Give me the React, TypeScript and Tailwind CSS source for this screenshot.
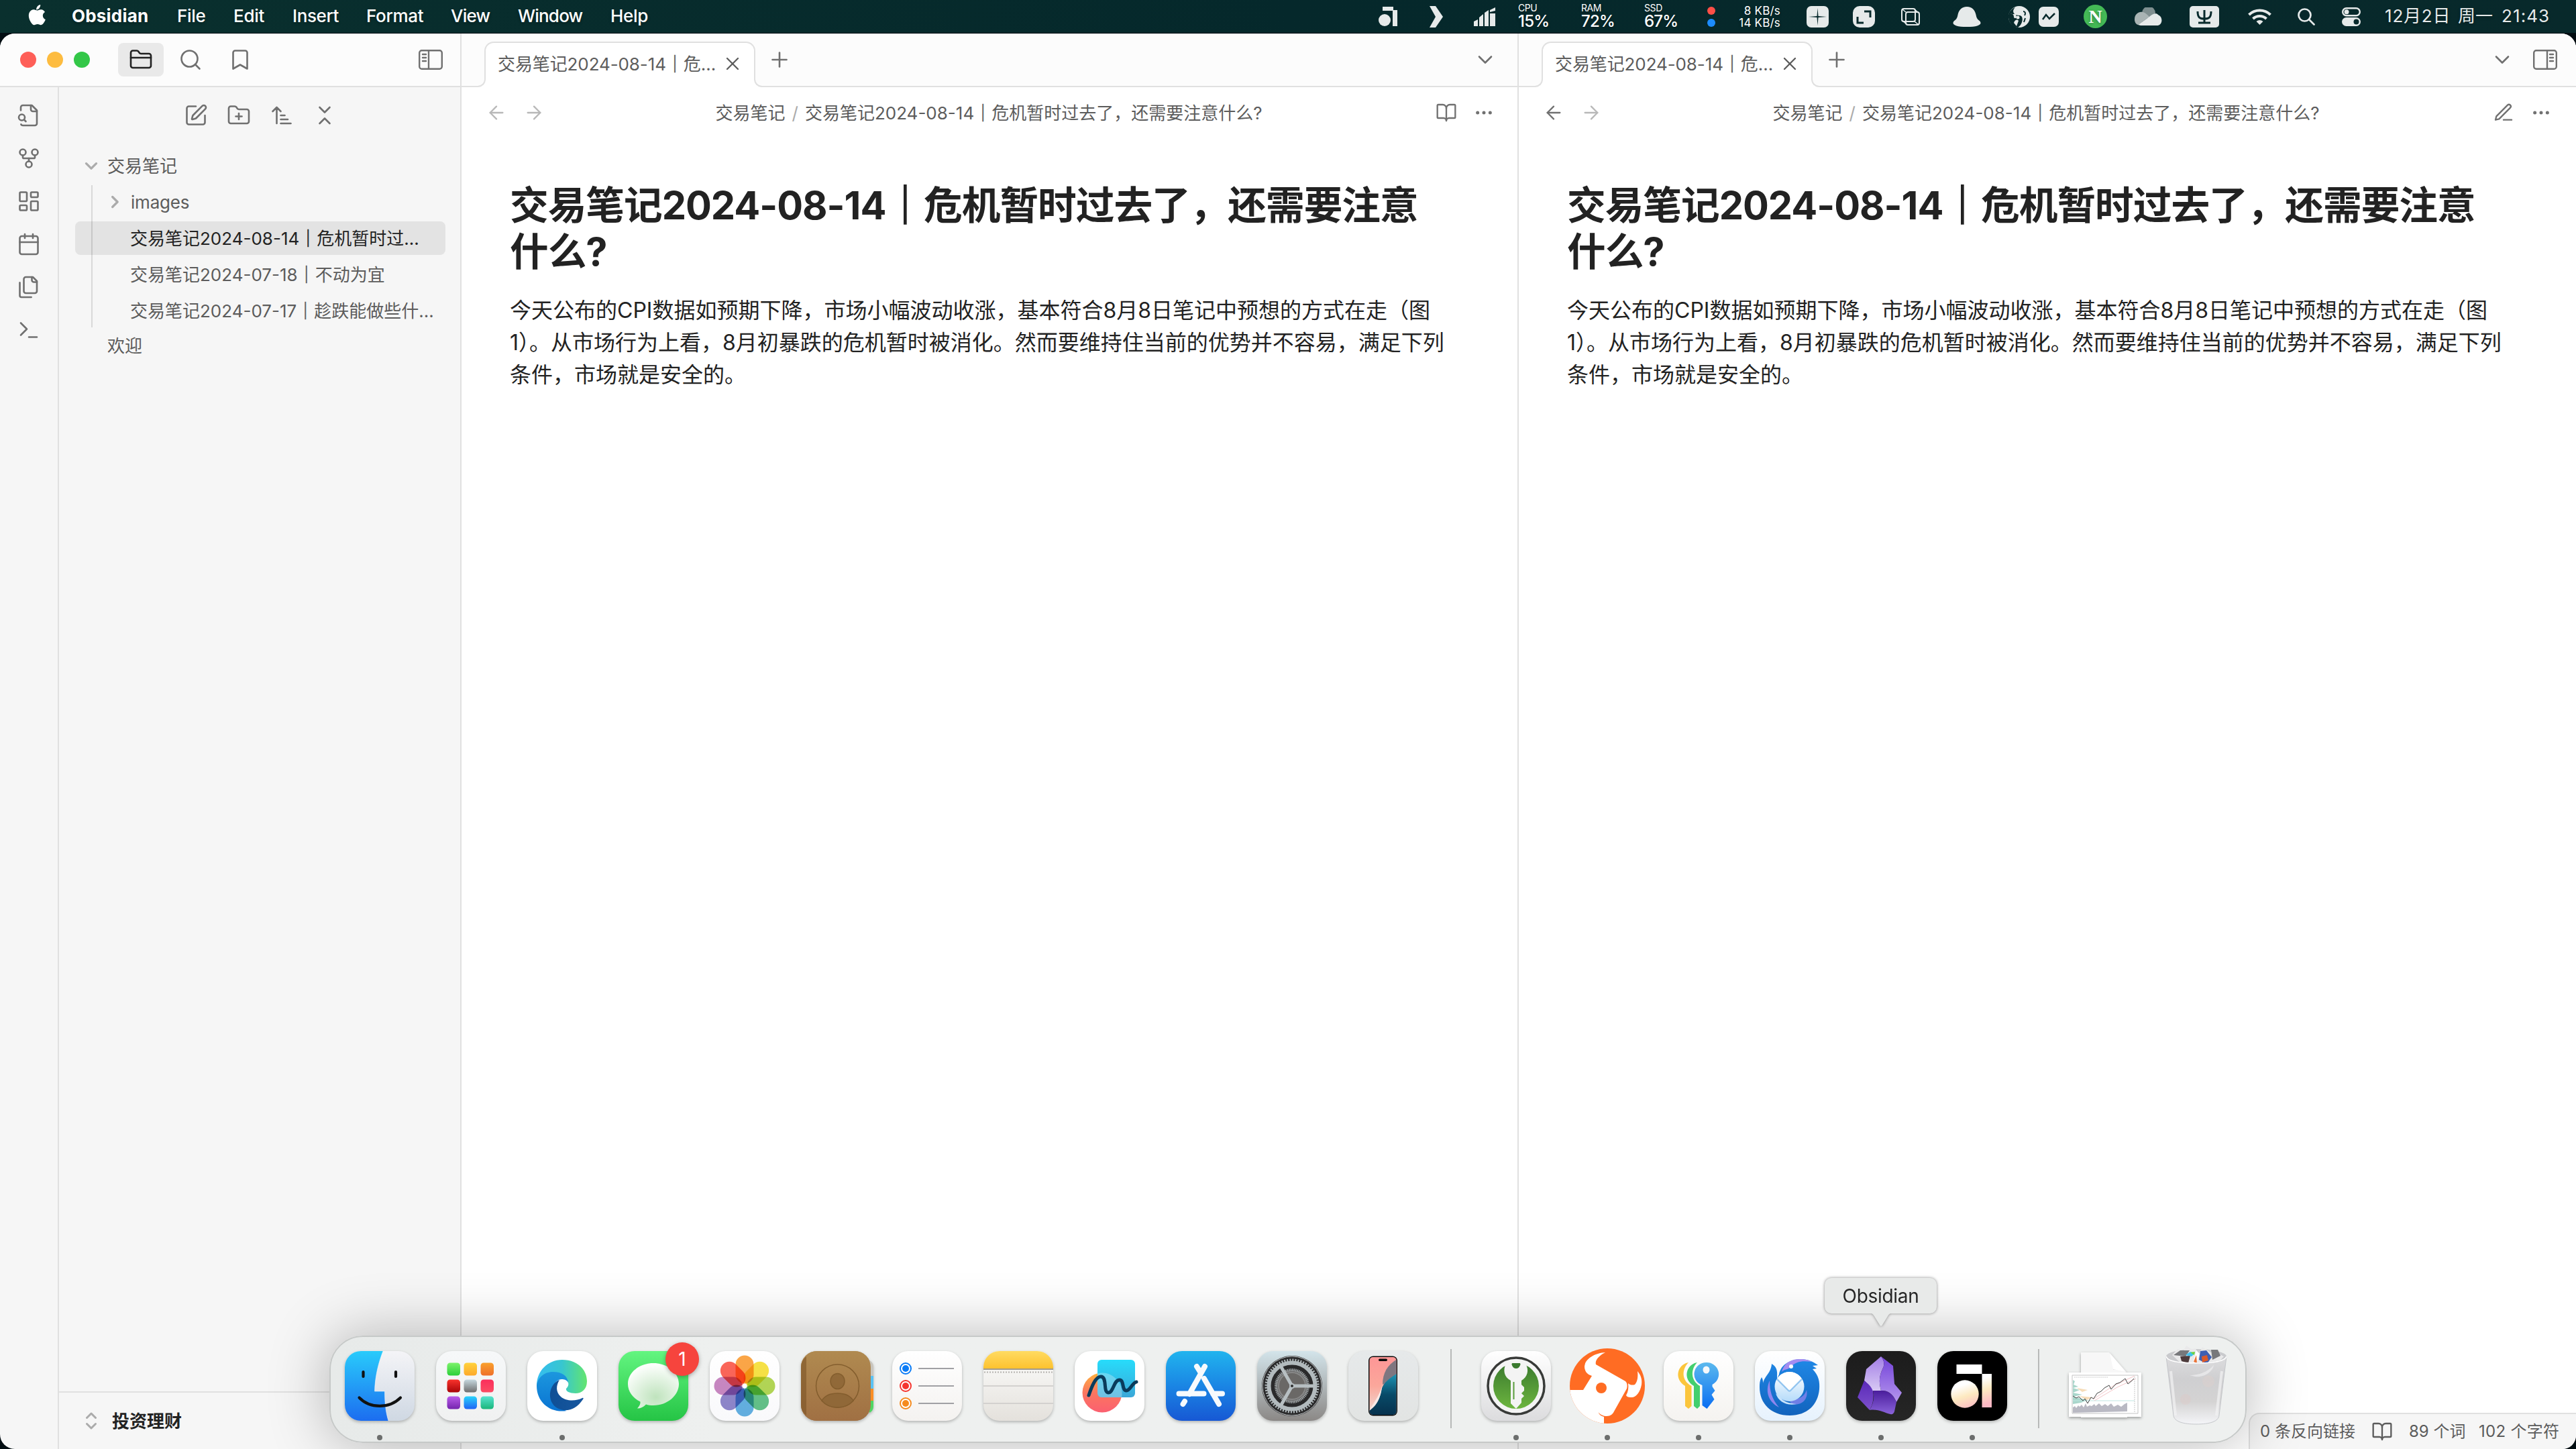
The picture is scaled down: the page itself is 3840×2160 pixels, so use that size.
import React from "react";
import {
  ArrowLeft, ArrowRight, Bookmark, BookOpen, Calendar, ChevronDown, ChevronsDownUp, Ellipsis,
  FolderClosed, FolderPlus, GitFork, LayoutDashboard, Plus, Search, SquarePen, X,
} from "lucide-react";

type P = { children?: React.ReactNode; className?: string };

const Line = ({ children, className = "size-9" }: P) => (
  <svg viewBox="0 0 24 24" fill="none" stroke="currentColor" strokeWidth="1.75" strokeLinecap="round" strokeLinejoin="round" className={className}>
    {children}
  </svg>
);

const T = ({ children, className = "" }: P) => (
  <span className={"whitespace-nowrap shrink-0 " + className}>{children}</span>
);

const Bar = () => <span className="[-webkit-text-stroke:0.7px_currentColor]">｜</span>;

/* ---------------------------------------------------------------- menu bar */

const menus: [string, string][] = [
  ["File", "ml-[44px] w-[40px] tracking-[-0.3px]"],
  ["Edit", "ml-[44px] w-[44px] tracking-[-0.3px]"],
  ["Insert", "ml-[44px] w-[67px] tracking-[-0.4px]"],
  ["Format", "ml-[43px] w-[84px] tracking-[-0.3px]"],
  ["View", "ml-[42px] w-[57px] tracking-[-0.8px]"],
  ["Window", "ml-[43px] w-[95px] tracking-[-0.8px]"],
  ["Help", "ml-[43px] w-[54px] tracking-[-0.3px]"],
];

const Stat = ({ label, value, className }: { label: string; value: string; className: string }) => (
  <div className={"flex flex-col shrink-0 text-white " + className}>
    <span className="text-[14px] leading-[12px] tracking-[-0.4px]">{label}</span>
    <span className="mt-[3px] text-[24px] font-medium leading-[22px] tracking-[-0.8px]">{value}</span>
  </div>
);

const MenuBar = () => (
  <header className="flex h-[49px] items-center bg-linear-to-r from-[#0a302e] via-[#05282b] to-[#08292b] text-[26px] text-white [text-shadow:0_2px_4px_rgba(0,0,0,0.3)]">
    <svg viewBox="0 0 27 32" className="ml-[41px] h-8 w-[27px] shrink-0 -mt-1" fill="#fff">
      <path d="M19.2 0c.2 2-.6 3.900-1.700 5.200-1.100 1.400-2.800 2.300-4.400 2.200-.2-1.900.7-3.900 1.700-5C16 1 17.800.1 19.200 0z" />
      <path d="M26 10.900c-2 1.200-3.200 3-3.200 5.300 0 2.600 1.600 4.900 4 5.800-.5 1.500-1.100 2.900-2.100 4.300-1.300 1.900-2.600 3.900-4.700 3.900-2 .1-2.700-1.200-5-1.200-2.400 0-3.100 1.200-5 1.200-2 .1-3.500-2.100-4.900-4C2.400 22.300.4 15.500 3.100 11c1.300-2.300 3.700-3.700 6.200-3.700 2 0 3.800 1.300 5 1.300s3.400-1.600 5.800-1.400c1 0 3.800.4 5.900 3.700z" />
    </svg>
    <T className="ml-[39px] -mt-[3px] w-[113px] font-bold tracking-[0.2px]">Obsidian</T>
    {menus.map(([m, c]) => (
      <div key={m} className={"shrink-0 -mt-[3px] font-medium " + c}><T>{m}</T></div>
    ))}

    <div className="ml-auto flex h-full shrink-0 items-center text-[#e6eaea]">
      <svg viewBox="0 0 28 29" className="h-[29px] w-7" fill="currentColor"><path d="M6 0h16v5h6v24h-7V6H6z" /><circle cx="9" cy="20" r="9" /></svg>
      <svg viewBox="0 0 20 32" className="ml-[48px] h-8 w-5" fill="currentColor"><path d="M0 0h9l11 16L9 32H0l9-16z" /></svg>
      <svg viewBox="0 0 32 28" className="ml-[46px] h-7 w-8" fill="currentColor"><path d="M0 21l6-3v10H0zM8 15l6-5v18H8zM16 8l6-4v24h-6zM24 4l8-4v5l-8 2zM24 9h8v19h-8z" /></svg>
      <Stat label="CPU" value="15%" className="ml-[34px] w-[94px]" />
      <Stat label="RAM" value="72%" className="w-[94px]" />
      <Stat label="SSD" value="67%" className="w-[94px]" />
      <div className="flex w-3 flex-col gap-[6px]"><i className="size-3 rounded-full bg-[#ff4f47]" /><i className="size-3 rounded-full bg-[#1c8cff]" /></div>
      <div className="flex w-[97px] flex-col items-end text-[17px] leading-[18px] tracking-[0.2px] text-white"><T>8 KB/s</T><T>14 KB/s</T></div>
      <svg viewBox="0 0 33 32" className="ml-[39px] h-8 w-[33px]"><rect width="33" height="32" rx="7" fill="currentColor" /><path d="M16.500 3l1 12L30 16l-12.500 1-1 12-1-12L3 16l12.500-1z" fill="#082a2c" /></svg>
      <svg viewBox="0 0 33 32" className="ml-[36px] h-8 w-[33px]"><rect width="33" height="32" rx="10" fill="currentColor" /><path d="M17 8h9v9M7 16v9h9" stroke="#082a2c" strokeWidth="3" fill="none" /></svg>
      <svg viewBox="0 0 28 26" className="ml-[39px] h-[26px] w-7" fill="none" stroke="currentColor" strokeWidth="2"><rect x="1" y="1" width="20" height="19" rx="3" /><rect x="7" y="6" width="20" height="19" rx="3" /><path d="M7 6L2 2M20 20l6 5M20 2l6 5M2 19l6 5" strokeWidth="1.500" /></svg>
      <svg viewBox="0 0 42 30" className="ml-[49px] h-[30px] w-[42px]" fill="currentColor"><path d="M21 0c8 0 12 5 13.500 12 .8 4 1.500 6 4 8 7 5 2 10-17.500 10S-3.500 25 3.500 20c2.500-2 3.200-4 4-8C9 5 13 0 21 0z" /></svg>
      <svg viewBox="0 0 32 32" className="ml-[41px] size-8"><circle cx="16" cy="16" r="16" fill="currentColor" /><path d="M10 2C4 8 8 14 16 14c4 0 6 4 4 10-1 3-3 6-6 8C4 31-1 22 0 13c1-5 5-9 10-11z" fill="#082a2c" /><path d="M3 12c3-1 5 1 5 4s4 3 4 0l-1-4zM8 25c1-4 5-6 7-3l-3 8z" fill="currentColor" /><circle cx="14" cy="17" r="2.500" fill="currentColor" /><path d="M22 8c3 0 4 3 2 6M25 18l-2 6" stroke="#082a2c" strokeWidth="2" fill="none" /></svg>
      <svg viewBox="0 0 30 30" className="ml-[13px] size-[30px]"><rect width="30" height="30" rx="7" fill="currentColor" /><path d="M6 19l5-7 5 6 8-8" stroke="#082a2c" strokeWidth="2.500" fill="none" /></svg>
      <div className="ml-[37px] flex size-[35px] items-center justify-center rounded-full bg-[#44b956] font-['Liberation_Serif',serif] text-[28px] font-bold leading-none text-white">N</div>
      <svg viewBox="0 0 41 27" className="ml-[41px] h-[27px] w-[41px]"><path d="M11 8a10 10 0 0 1 20 1l-10 8z" fill="#7f8f90" /><path d="M0 18C0 10 6 6 12 7c5 1 8 5 10 7L5 26c-3-1-5-4-5-8z" fill="#a9b4b4" /><path d="M5 26l17-12c5-5 11-6 13-3 8 3 7 16-2 16H9z" fill="currentColor" /></svg>
      <svg viewBox="0 0 44 32" className="ml-[41px] h-8 w-11"><rect width="44" height="32" rx="5" fill="currentColor" /><path d="M12 8c0 9 3 11 10 11s10-2 10-11M22 6v19M13 25h18" stroke="#082a2c" strokeWidth="3" fill="none" /></svg>
      <svg viewBox="0 0 35 26" className="ml-[43px] h-[26px] w-[35px]" fill="none" stroke="currentColor" strokeWidth="4"><path d="M1.500 10a23 23 0 0 1 32 0M7.500 16a14.500 14.500 0 0 1 20 0" /><path d="M17.500 25l-5-5a7.500 7.500 0 0 1 10 0z" fill="currentColor" stroke="none" /></svg>
      <svg viewBox="0 0 26 26" className="ml-[39px] size-[26px]" fill="none" stroke="currentColor" strokeWidth="2.700" strokeLinecap="round"><circle cx="10.500" cy="10.500" r="9" /><path d="M17.500 17.500l7 7" /></svg>
      <svg viewBox="0 0 28 28" className="ml-[40px] size-7"><rect x="1.200" y="1.200" width="25.600" height="11" rx="5.500" fill="none" stroke="currentColor" strokeWidth="2.400" /><circle cx="7" cy="6.700" r="3.500" fill="currentColor" /><rect y="15" width="28" height="13" rx="6.500" fill="currentColor" /><circle cx="21.500" cy="21.500" r="4" fill="#082a2c" /></svg>
      <div className="-mt-[2px] ml-[36px] w-[109px] tracking-[0.8px]"><T>12月2日</T></div>
      <div className="-mt-[2px] w-[65px]"><T>周一</T></div>
      <div className="-mt-[2px] w-[111px] tracking-[1.1px]"><T>21:43</T></div>
    </div>
  </header>
);

/* ----------------------------------------------------------------- sidebar */

const PanelIcon = ({ flip = false }: { flip?: boolean }) => (
  <svg viewBox="0 0 36 30" className={"h-[30px] w-9 shrink-0 " + (flip ? "-scale-x-100" : "")} fill="none" stroke="currentColor" strokeWidth="2.400" strokeLinecap="round">
    <rect x="1.200" y="1.200" width="33.600" height="27.600" rx="3.500" />
    <path d="M15 1v28M6 7h5M6 12h5M6 17h5" />
  </svg>
);

const Ribbon = () => (
  <nav className="flex w-[88px] shrink-0 flex-col items-center gap-7 border-r-2 border-[#e0e0e0] pt-6 text-[#707070]">
    <Line><path d="M14 2v4a2 2 0 0 0 2 2h4" /><path d="M4.268 21a2 2 0 0 0 1.727 1H18a2 2 0 0 0 2-2V7l-5-5H6a2 2 0 0 0-2 2v3" /><path d="m9 18-1.500-1.500" /><circle cx="5" cy="14" r="3" /></Line>
    <GitFork className="size-9" strokeWidth={1.75} />
    <LayoutDashboard className="size-9" strokeWidth={1.75} />
    <Calendar className="size-9" strokeWidth={1.75} />
    <Line><path d="M20 7h-3a2 2 0 0 1-2-2V2" /><path d="M9 18a2 2 0 0 1-2-2V4a2 2 0 0 1 2-2h7l4 4v10a2 2 0 0 1-2 2Z" /><path d="M3 7.600v12.800A1.600 1.600 0 0 0 4.600 22h9.800" /></Line>
    <Line><path d="m4 17 6-6-6-6M12 19h8" /></Line>
  </nav>
);

const Tri = ({ className = "" }: P) => (
  <svg viewBox="0 0 24 24" fill="none" stroke="#ababab" strokeWidth="4" strokeLinecap="round" strokeLinejoin="round" className={"size-5 shrink-0 " + className}><path d="M3 8L12 17L21 8" /></svg>
);

const Explorer = () => (
  <aside className="flex w-[598px] shrink-0 flex-col">
    <div className="flex justify-center gap-7 pl-[2px] pt-6 text-[#707070]">
      <SquarePen className="size-9" strokeWidth={1.75} />
      <FolderPlus className="size-9" strokeWidth={1.75} />
      <Line><path d="m3 8 4-4 4 4M7 4v16M11 12h4M11 16h7M11 20h10" /></Line>
      <ChevronsDownUp className="size-9" strokeWidth={1.75} />
    </div>
    <div className="mt-[30px] flex flex-col pl-6 pr-[22px] text-[26px] text-[#5c5c5c]">
      <div className="mb-[2px] flex h-[54px] items-center pl-[14px]"><Tri /><T className="ml-[14px]">交易笔记</T></div>
      <div className="relative flex flex-col gap-1">
        <div className="absolute left-[24px] top-[0px] z-10 h-[212px] w-[2px] bg-black/12" />
        <div className="flex h-[50px] items-center pl-[49px]"><Tri className="-rotate-90" /><T className="ml-[14px] tracking-[-0.2px]">images</T></div>
        <div className="flex h-[50px] items-center rounded-lg bg-[#e3e3e3] pl-[82px] text-[#222]"><T>交易笔记2024-08-14<Bar />危机暂时过…</T></div>
        <div className="flex h-[50px] items-center pl-[82px]"><T>交易笔记2024-07-18<Bar />不动为宜</T></div>
        <div className="flex h-[50px] items-center pl-[82px]"><T>交易笔记2024-07-17<Bar />趁跌能做些什…</T></div>
      </div>
      <div className="mt-[2px] flex h-[50px] items-center pl-12">欢迎</div>
    </div>
    <div className="mt-auto flex h-[86px] items-center border-t-2 border-[#e0e0e0] pl-[38px] text-[26px] font-semibold text-[#222]">
      <svg viewBox="0 0 20 26" className="h-[26px] w-5" fill="none" stroke="#ababab" strokeWidth="3" strokeLinecap="round" strokeLinejoin="round"><path d="M3.500 8.500L10 2l6.500 6.500M3.500 17.500L10 24l6.500-6.500" /></svg>
      <T className="ml-[21px]">投资理财</T>
    </div>
  </aside>
);

/* -------------------------------------------------------------------- pane */

const TabStrip = ({ last = false }: { last?: boolean }) => (
  <div className="flex h-20 shrink-0 items-end bg-[#fcfcfc] text-[#5c5c5c]">
    <div className="h-full w-[24px] shrink-0 border-b-2 border-[#e0e0e0]" />
    <div className="flex h-full w-3 shrink-0 flex-col justify-end"><div className="z-20 h-[14px] bg-white"><div className="h-full w-3 rounded-br-[12px] border-b-2 border-r-2 border-[#e0e0e0] bg-[#fcfcfc]" /></div></div>
    <div className="z-10 -mx-[2px] flex h-[68px] w-[404px] shrink-0 items-center rounded-t-[14px] border-2 border-b-0 border-[#e0e0e0] bg-white pb-[4px] pl-[18px] text-[26px]">
      <T className="w-[334px] tracking-[-0.1px]">交易笔记2024-08-14<Bar />危…</T>
      <X className="size-8" strokeWidth={1.75} />
    </div>
    <div className="flex h-full w-3 shrink-0 flex-col justify-end"><div className="z-20 h-[14px] bg-white"><div className="h-full w-3 rounded-bl-[12px] border-b-2 border-l-2 border-[#e0e0e0] bg-[#fcfcfc]" /></div></div>
    <div className="flex h-full grow items-center border-b-2 border-[#e0e0e0] text-[#707070]">
      <Plus className="ml-[8px] size-9" strokeWidth={1.75} />
      <div className={"ml-auto flex items-center gap-[28px] " + (last ? "pr-7" : "pr-[30px]")}>
        <ChevronDown className="size-9" strokeWidth={1.75} />
        {last && <PanelIcon flip />}
      </div>
    </div>
  </div>
);

const Pane = ({ last = false }: { last?: boolean }) => (
  <section className={"flex w-[1576px] shrink-0 flex-col bg-white " + (last ? "" : "border-r-2 border-[#e0e0e0]")}>
    <TabStrip last={last} />
    <div className={"flex h-[76px] shrink-0 items-center pl-[36px] text-[26px] text-[#5c5c5c] " + (last ? "pr-9" : "pr-[34px]")}>
      <ArrowLeft className={"size-8 " + (last ? "text-[#707070]" : "text-[#b8b8b8]")} strokeWidth={1.75} />
      <ArrowRight className="ml-6 size-8 text-[#b8b8b8]" strokeWidth={1.75} />
      <div className="flex grow justify-center pr-[4px]">
        <T>交易笔记</T><span className="mx-[10px] text-[#ababab]">/</span><T>交易笔记2024-08-14<Bar />危机暂时过去了，还需要注意什么?</T>
      </div>
      {last
        ? <Line className="size-8 text-[#707070]"><path d="M12 20h9" /><path d="M16.500 3.500a2.120 2.120 0 0 1 3 3L7 19l-4 1 1-4Z" /></Line>
        : <BookOpen className="size-8 text-[#707070]" strokeWidth={1.75} />}
      <Ellipsis className="ml-6 size-8 text-[#707070]" strokeWidth={1.75} />
    </div>
    <article className="pl-[72px] text-[#222]">
      <h1 className="mt-[66px] text-[57.660px] font-bold leading-[69px] tracking-[-1px]">
        <T>交易笔记2024-08-14<span className="[-webkit-text-stroke:2px_currentColor]">｜</span>危机暂时过去了，还需要注意</T><br />
        <T>什么?</T>
      </h1>
      <p className="mt-[29px] text-[32px] leading-[48px]">
        <T>今天公布的CPI数据如预期下降，市场小幅波动收涨，基本符合8月8日笔记中预想的方式在走（图</T><br />
        <T>1）。从市场行为上看，8月初暴跌的危机暂时被消化。然而要维持住当前的优势并不容易，满足下列</T><br />
        <T>条件，市场就是安全的。</T>
      </p>
    </article>
  </section>
);

/* -------------------------------------------------------------- dock icons */

const G = ({ id, c, h = false }: { id: string; c: string[]; h?: boolean }) => (
  <linearGradient id={id} x1="0" y1="0" x2={h ? "1" : "0"} y2={h ? "0" : "1"}>
    {c.map((k, i) => <stop key={i} offset={i / (c.length - 1)} stopColor={k} />)}
  </linearGradient>
);

const Tile = ({ id, c, children }: { id: string; c: string[]; children?: React.ReactNode }) => (
  <svg viewBox="0 0 104 104" className="size-[104px] overflow-visible drop-shadow-[0_2px_2px_rgba(0,0,0,0.25)]">
    <defs><G id={id} c={c} /><clipPath id={id + "-clip"}><rect width="104" height="104" rx="24" /></clipPath></defs>
    <rect width="104" height="104" rx="24" fill={`url(#${id})`} />
    {children}
  </svg>
);

const Finder = () => (
  <Tile id="finder" c={["#f4f4f7", "#cfd8e3"]}>
    <defs><G id="finder-b" c={["#29cbfb", "#1c6df0"]} /></defs>
    <g clipPath="url(#finder-clip)"><path d="M0 0H57C50 18 45 38 44.500 60H59.500C59.500 77 61 91 65 104H0z" fill="url(#finder-b)" /></g>
    <path d="M57 0C50 18 45 38 44.500 60H59.500C59.500 77 61 91 65 104" fill="none" stroke="#fff" strokeOpacity=".5" />
    <g fill="none" stroke="#111" strokeWidth="4.200" strokeLinecap="round"><path d="M27.500 31v7M76 31v7M21.500 69.500c16 16.500 45 16.500 61.500 0" /></g>
  </Tile>
);

const launch = [["#7cf36b", "#2bcf3a"], ["#ffd23d", "#fda92b"], ["#f9a02c", "#ee6f2b"], ["#f9332c", "#a90509"], ["#c6d8df", "#6e6e6e"], ["#fb2e5c", "#fb4c63"], ["#b95bea", "#7424ad"], ["#29d3fb", "#2063f5"], ["#56e3cf", "#1bb67b"]];
const Launchpad = () => (
  <Tile id="launch" c={["#f6f8f9", "#f0f1f1"]}>
    <defs>{launch.map((c, i) => <G key={i} id={"lp" + i} c={c} />)}</defs>
    {launch.map((_, i) => <rect key={i} x={16.500 + (i % 3) * 25} y={17.500 + Math.floor(i / 3) * 25} width="19.500" height="19" rx="4.500" fill={`url(#lp${i})`} />)}
  </Tile>
);

const Edge = () => (
  <Tile id="edge" c={["#ffffff", "#ffffff"]}>
    <defs><G id="edge-a" c={["#35bdf1", "#37c6d0", "#63e56f"]} h /><G id="edge-b" c={["#1c97de", "#0a74d2"]} /><G id="edge-c" c={["#0f4f95", "#17579f"]} h /></defs>
    <path d="M14 52C14 29 31 13 52 13c22 0 37 14 37 32 0 12-8 18-17 18-9 0-15-3-14-7 3-3 4-6 3-9-3-8-16-9-26-5-11 3-18 6-21 10z" fill="url(#edge-a)" />
    <path d="M14 52c1-12 11-21 24-21 14 0 22 6 23 16-2-4-6-5-10-5-8 0-15 11-12 25 3 12 12 20 20 22-24 4-45-12-45-37z" fill="url(#edge-b)" />
    <path d="M48 43c-5 8-6 18 2 25 9 8 24 6 32 2 2-1 2 1 1 2-8 12-18 17-29 16-14-2-21-13-20-25 1-9 6-17 14-20z" fill="url(#edge-c)" />
  </Tile>
);

const Messages = () => (
  <Tile id="msg" c={["#63f580", "#25c445"]}>
    <defs><radialGradient id="msg-b" cx=".55" cy=".75" r=".7"><stop offset="0" stopColor="#bfe3bd" /><stop offset="1" stopColor="#fbfefb" /></radialGradient></defs>
    <path d="M52 18c21 0 38 14 38 31S73 81 52 81c-4 0-8-.5-11-1.500-4 4-8 6-13 6 3-3 5-7 4.500-10C21 70 14 60 14 49c0-17 17-31 38-31z" fill="url(#msg-b)" />
  </Tile>
);

const petals = ["#fb9a2e", "#f6de2c", "#a9d13f", "#4fba79", "#4ea6de", "#8076c4", "#c178b9", "#fa5142"];
const Photos = () => (
  <Tile id="photos" c={["#ffffff", "#f9f9fb"]}>
    <g className="mix-blend-multiply">{petals.map((p, i) => <rect key={i} x="38.500" y="6.500" width="27" height="42" rx="13.500" fill={p} fillOpacity=".88" className="mix-blend-multiply" transform={`rotate(${i * 45} 52 52)`} />)}</g>
    <circle cx="52" cy="52" r="2.500" fill="#fff" />
  </Tile>
);

const Contacts = () => (
  <Tile id="contacts" c={["#b08a50", "#a07043"]}>
    <path d="M102 14c4 2 6 5 6 10v14h-6z" fill="#c9c5bd" /><path d="M102 37h6v19h-6z" fill="#5ac2f4" /><path d="M102 56h6v18h-6z" fill="#fb8e24" /><path d="M102 74h6v8c0 5-2 8-6 10z" fill="#4fd663" />
    <rect width="104" height="104" rx="24" fill="url(#contacts)" />
    <path d="M8 8v88C3 92 0 87 0 80V24C0 17 3 12 8 8z" fill="#7b5427" opacity=".6" />
    <g fill="#8d6636" stroke="#7d5829" strokeWidth="1.500" opacity=".85"><circle cx="54.500" cy="52" r="32" fill="none" /><ellipse cx="54.500" cy="45" rx="10.500" ry="11.500" /><path d="M31 74c4-7 13-11 23.500-11S74 67 78 74c-6 7-14 10-23.500 10S37 81 31 74z" /></g>
  </Tile>
);

const Reminders = () => (
  <Tile id="rem" c={["#ffffff", "#f4f2f0"]}>
    {["#0a7bf6", "#f5352f", "#f58b1e"].map((c, i) => (
      <g key={c}><circle cx="20" cy={26 + i * 26} r="8" fill="#fff" stroke={c} strokeWidth="2" /><circle cx="20" cy={26 + i * 26} r="5" fill={c} /><path d={`M39 ${26 + i * 26}h53`} stroke="#a0a0a4" strokeWidth="2.200" /></g>
    ))}
  </Tile>
);

const Notes = () => (
  <Tile id="notes" c={["#fcfcfb", "#e4e1dc"]}>
    <defs><G id="notes-y" c={["#ffdb62", "#fdc22f"]} /></defs>
    <g clipPath="url(#notes-clip)"><path d="M0 0h104v26H0z" fill="url(#notes-y)" /><path d="M0 27h104" stroke="#a29a8c" strokeWidth="2" /><path d="M1 31.500h103" stroke="#b4b2ae" strokeWidth="2" strokeDasharray="2 2" /><path d="M0 52h104M0 78h104" stroke="#d3d1cf" strokeWidth="2" /></g>
  </Tile>
);

const Freeform = () => (
  <Tile id="free" c={["#ffffff", "#ffffff"]}>
    <defs><G id="free-a" c={["#fdb13d", "#fb7660", "#fb6070"]} /><G id="free-b" c={["#27dcfb", "#3ba7d8"]} /></defs>
    <circle cx="41" cy="62" r="29.500" fill="url(#free-a)" />
    <rect x="34" y="13" width="56" height="56" rx="6" fill="url(#free-b)" />
    <path d="M34 33.500c18-5 36 10 36.500 28 0 3 0 5-.5 7.500H40a6 6 0 0 1-6-6z" fill="#fff" opacity=".28" />
    <path d="M21 66c4-12 10-28 18-28 10 0 3 24 11 24 8 0 8-19 17-19 7 0 3 16 10 16 6 0 9-12 15-13" fill="none" stroke="#0a3b5b" strokeWidth="5" strokeLinecap="round" strokeLinejoin="round" />
  </Tile>
);

const AppStore = () => (
  <Tile id="store" c={["#21b4ee", "#1a85e4", "#1758d4"]}>
    <g stroke="#f6fafd" strokeWidth="8" strokeLinecap="round" fill="none"><path d="M58 23L35 64M46 23l5 8M57 41l22 38M19.500 63.500h37M70 63.500h14M28 75l-2.500 4" /></g>
  </Tile>
);

const Settings = () => (
  <Tile id="set" c={["#d3e4ea", "#8b8886"]}>
    <circle cx="52" cy="52" r="45" fill="#2a2a2b" /><circle cx="52" cy="52" r="44" fill="none" stroke="#c3c7c9" strokeWidth="1" />
    <circle cx="52" cy="52" r="38" fill="none" stroke="#aeb6b9" strokeWidth="5" strokeDasharray="2 1.980" />
    <circle cx="52" cy="52" r="34.500" fill="none" stroke="#b2babd" strokeWidth="6" />
    <circle cx="52" cy="52" r="24" fill="#6d6d6d" stroke="#9da2a4" strokeWidth="4" strokeDasharray="1.500 1" /><circle cx="52" cy="52" r="20" fill="#6a6866" stroke="#888" strokeWidth="2" />
    <g stroke="#b7bfc2" strokeWidth="5" strokeLinecap="round"><path d="M52 52h32M52 52L36 24M52 52L36 80" /></g>
    <circle cx="52" cy="52" r="3" fill="#2d2d2d" stroke="#b7bfc2" strokeWidth="2" />
  </Tile>
);

const Phone = () => (
  <Tile id="phone" c={["#e6e9ea", "#e2e4e3"]}>
    <defs><G id="ph-a" c={["#fd9696", "#fba79b", "#efe0da"]} /><G id="ph-b" c={["#1d98b8", "#084a68", "#06304c"]} /><clipPath id="ph-c"><rect x="31.500" y="9" width="40" height="86" rx="5" /></clipPath></defs>
    <rect x="30" y="7.500" width="43" height="89" rx="7" fill="#0a0a0a" />
    <g clipPath="url(#ph-c)"><path d="M31 8h42v88H31z" fill="url(#ph-a)" /><path d="M73 12c-14 8-22 20-22 38l22-12z" fill="#7f7680" /><path d="M73 33c-16 10-22 16-24 26-2 14-9 22-18 30v8h42z" fill="url(#ph-b)" /><path d="M51 47c-2 16-11 26-20 42 12-8 18-20 20-42z" fill="#f9e9e6" /></g>
    <rect x="45" y="11.500" width="13" height="3.500" rx="1.700" fill="#0a0a0a" />
  </Tile>
);

const KeePass = () => (
  <Tile id="kp" c={["#ffffff", "#dcdcde"]}>
    <defs><G id="kp-g" c={["#3a7a2e", "#6db53f"]} /></defs>
    <circle cx="52" cy="52" r="42" fill="#f4f4f4" stroke="#383a38" strokeWidth="3.500" /><circle cx="52" cy="52" r="34" fill="url(#kp-g)" />
    <path d="M37 19c-5 9-3 20 7 25v34l8 8 8-9v-6l4-4-4-4 4-4v-5l-4-4v-6c9-5 12-16 6-25l-8-2c2 4-2 8-6 8s-8-4-6-8z" fill="#f4f4f4" />
    <path d="M46 18h12c0 5-2 8-6 8s-6-3-6-8z" fill="#3a7a2e" /><path d="M48.500 46v26" stroke="#5a9d3c" strokeWidth="2" />
  </Tile>
);

const Bull = () => (
  <svg viewBox="0 0 112 112" className="size-[112px] shrink-0">
    <clipPath id="bull"><circle cx="56" cy="56" r="56" /></clipPath>
    <g clipPath="url(#bull)"><path d="M0 0h112v112H0z" fill="#ff6c23" />
      <path d="M53 6C38 7 23 15 22 27c0 7 4 12 11 14L20 62H-2v52h53V102c-4-1-7-3-8.500-7 3 4 8 6 12.500 6 6 0 9-3 11-7L85 60c1-4 1-8-2-11L39 24c-2-7 6-14 14-18z" fill="#fff" />
      <path d="M101 34c5 6 7 12 6 20-2 12-9 20-16 19-4 0-6-1-7-3 3-5 4-11 3-18 3 3 7 3 10 2 4-4 5-12 4-20z" fill="#fff" /></g>
    <circle cx="47" cy="59" r="8" fill="#ff6c23" />
  </svg>
);

const Keys = () => (
  <Tile id="keys" c={["#ffffff", "#f5f3f0"]}>
    <defs><G id="k-b" c={["#5bb9ee", "#0a6ef2"]} /></defs>
    <path d="M37 17C20 20 15 42 32 52v30l5 4 4.500-4V52C26 44 27 27 37 17z" fill="#fbc53c" />
    <path d="M50 17C33 20 28 42 45 52v30l5 4 4-4V52C40 44 40 27 50 17z" fill="#43cf6e" />
    <path d="M63.500 17a18 17.500 0 0 1 9 33v3l4 6-5 6 4 7-11 14-7-5V51a18 17.500 0 0 1 6-34z" fill="url(#k-b)" />
    <ellipse cx="63.500" cy="28" rx="5" ry="5.500" fill="#f4f8fb" />
  </Tile>
);

const Thunderbird = () => (
  <Tile id="tb" c={["#ffffff", "#e6f2fd"]}>
    <defs><G id="tb-a" c={["#1f88e6", "#1263bd"]} /><G id="tb-m" c={["#ffffff", "#b5dbfa"]} /></defs>
    <path d="M25 19c10 6 8 14 8 22l3-6c2-13 14-22 31-23 13 0 20 4 27 9l-8 1 6 4-6 1c9 9 11 19 10 30-2 23-18 39-44 39C24 96 7 78 7 54c0-5 0-10 3-15 2 3 2 6 2 9 3-12 12-15 13-29z" fill="url(#tb-a)" />
    <path d="M40 31c3-12 12-19 27-19 9 0 14 2 18 4-14-2-24-1-32 8-4 4-10 3-13 7z" fill="#a58cf0" />
    <path d="M22 44c-8 18 0 33 14 40-11-13-14-25-14-40z" fill="#8f86ee" /><path d="M50 72c12 2 24-3 27-14 3 13-6 24-22 21z" fill="#6f7fe6" />
    <circle cx="51.500" cy="53" r="22" fill="url(#tb-m)" /><path d="M38 69c4 6 13 9 24 10-14 3-27-3-31-16z" fill="#c7e3fb" />
    <path d="M33 42l17 17c1 1 2 1 3 0l17-17" fill="none" stroke="#8fc3ef" strokeWidth="2" /><path d="M34 40l16 17c1 1 2 1 3 0l16-17C60 28 43 28 34 40z" fill="#fff" />
    <circle cx="54" cy="23" r="3" fill="#fff" />
  </Tile>
);

const Obsidian = () => (
  <Tile id="obs" c={["#1c1c1c", "#262626"]}>
    <defs><G id="o-a" c={["#a37fe6", "#d9caf4"]} /><G id="o-b" c={["#7241d8", "#b596ee"]} /><G id="o-c" c={["#4a1d9c", "#8a63da"]} /><G id="o-d" c={["#5a29b8", "#7d50cc"]} /></defs>
    <path d="M52 8L30 27l-3 17c5 5 8 9 9 16l16-1c-4-15-2-24 3-34 3-6 1-12-3-17z" fill="url(#o-a)" />
    <path d="M52 8c4 5 6 11 3 17-5 10-7 19-3 34 11 0 17 4 23 17l8-14-11-13-2-27z" fill="url(#o-b)" />
    <path d="M52 59c11 0 17 4 23 17l-3 14c-1 3-3 5-6 4-10-2-18-8-31-6 5-9 8-18 5-29z" fill="url(#o-c)" />
    <path d="M27 44c9 7 15 14 13.500 25-.5 9-2.500 13-5.500 19L17 69z" fill="url(#o-d)" />
  </Tile>
);

const Ai = () => (
  <Tile id="ai" c={["#000000", "#000000"]}>
    <defs><linearGradient id="ai-g" gradientUnits="userSpaceOnUse" x1="40" y1="50" x2="52" y2="86"><stop offset="0" stopColor="#fff" /><stop offset=".45" stopColor="#fde9c0" /><stop offset="1" stopColor="#fdb9c4" /></linearGradient></defs>
    <path d="M28.500 20h38v14h-38zM66.500 34H81v50H66.500z" fill="url(#ai-g)" /><circle cx="41" cy="64" r="20.700" fill="url(#ai-g)" />
  </Tile>
);

const DocStack = () => (
  <svg viewBox="0 0 108 104" className="-mt-[3px] h-[104px] w-[108px] shrink-0 drop-shadow-[0_2px_2px_rgba(0,0,0,0.35)]">
    <path d="M18 3h42l27 31v66H18z" fill="#f7f7f7" /><path d="M60 3c5 8 6 16 6 26 8-1 15 0 21 5z" fill="#e2e2e2" /><path d="M61 4l5 24 19 4z" fill="#fff" />
    <path d="M0 33h108v66H0z" fill="#fff" /><path d="M5 37h98v57H5z" fill="#fff" stroke="#c3c3c3" />
    <path d="M6 44l3 2-2 5 7 3-8 2 10 3-10 4 14 3-14 3 22 5-10 4-12 2z" fill="#a9d6cb" /><path d="M12 56l16 3-8 3zM15 68l20 2-8 4z" fill="#f6dcb8" />
    <path d="M6 75h92" stroke="#bfe6e2" /><path d="M36 73l30-20 32-15M38 75l34-20 28-13" stroke="#f3c6c9" fill="none" />
    <path d="M6 68l5 3 4-2 6 6 3-3 4 7 5-9 4 2 5-8 6-3 5-5 7-4 3 6 7-8 6-2 8-6 4 8 5-4 4-4" fill="none" stroke="#444" strokeWidth="1" />
    <path d="M6 93V85l3-2 2 3 3-4 2 2 3-3 3 4 3-6 2 5 4-2 3 1 4-3 2 3 5-4 4 4 5-3 4 3 5-4 4 5 6-3 5 3 5-4 4-2v13z" fill="#b9b9c3" />
    <path d="M98 39v54M8 40h50" stroke="#bbb" strokeWidth=".8" strokeDasharray="2 1" />
  </svg>
);

const Trash = () => (
  <svg viewBox="0 0 92 120" className="-mt-[5px] h-[120px] w-[92px] shrink-0">
    <defs><G id="tr" c={["#dcdcde", "#cfcfd1", "#d4d3d3", "#f4f5f8"]} /></defs>
    <ellipse cx="46" cy="18" rx="45" ry="11" fill="#c9cacd" />
    <path d="M10 16l8-9 9 2 4-7 8 5 6-1 4 10 6-12 12 8 6-3 8 6 6 3-10 11-28 3-24-2z" fill="#e9e9ea" />
    <path d="M12 16l10-7 14 0-6 9zM68 8l10 0 4 9-12 6z" fill="#77787b" /><path d="M22 18l15-1-3 11-10-3z" fill="#4e3b3c" /><path d="M30 16l7-5 7 2-5 5z" fill="#3fc1ee" /><path d="M37 12l7-1-1 5z" fill="#6dd23d" />
    <path d="M52 10l9-1 8 10-7 10-12-6z" fill="#3d5fb3" /><path d="M54 18l8-2 2 8-9 3z" fill="#da5a2a" /><path d="M46 9l5 5-5 15-5-1z" fill="#fff" /><path d="M42 26l4-10 1 12z" fill="#e8743a" />
    <path d="M1 18c2 7 20 10 45 10s43-3 45-10l-11 88c-1 9-14 13-34 13s-33-4-34-13z" fill="url(#tr)" stroke="#c4c6ca" strokeWidth="1" />
    <path d="M1 18c2 7 20 10 45 10s43-3 45-10" fill="none" stroke="#fff" strokeWidth="1.500" />
    <path d="M36 46c14 0 27-5 36-15-1 9-14 19-28 17z" fill="#eeeeef" opacity=".7" /><path d="M8 40l7 66M84 40l-8 66" stroke="#f3f3f4" strokeWidth="4" opacity=".7" /><circle cx="30" cy="82" r="8" fill="#e2c6c3" opacity=".3" /><circle cx="64" cy="55" r="9" fill="#e4cfc9" opacity=".3" />
  </svg>
);

const Slot = ({ children, run = false, badge }: P & { run?: boolean; badge?: string }) => (
  <div className="relative flex h-[154px] w-[136px] shrink-0 flex-col items-center">
    <div className="flex h-[146px] items-center justify-center">{children}</div>
    {run && <i className="size-2 rounded-full bg-[#6c6e6d]" />}
    {badge && <span className="absolute left-[86px] top-[8px] flex size-[50px] items-center justify-center rounded-full bg-[#f6443d] text-[28px] text-white shadow-[0_2px_6px_rgba(0,0,0,0.3)]">{badge}</span>}
  </div>
);

const Dock = () => (
  <div className="absolute left-[491px] top-[1991px] flex h-[160px] w-[2858px] rounded-[50px] border-2 border-[#c6c9c8] bg-linear-to-r from-[#e7eae9] via-[#eef0ef] via-20% to-[#eef0ef] pl-[5px] shadow-[0_0_90px_rgba(0,0,0,0.29)]">
    <Slot run><Finder /></Slot><Slot><Launchpad /></Slot><Slot run><Edge /></Slot><Slot badge="1"><Messages /></Slot>
    <Slot><Photos /></Slot><Slot><Contacts /></Slot><Slot><Reminders /></Slot><Slot><Notes /></Slot><Slot><Freeform /></Slot>
    <Slot><AppStore /></Slot><Slot><Settings /></Slot><Slot><Phone /></Slot>
    <i className="ml-8 mr-[28px] mt-[18px] h-[118px] w-[2px] shrink-0 bg-[#b7b9b8]" />
    <Slot run><KeePass /></Slot><Slot run><Bull /></Slot><Slot run><Keys /></Slot><Slot run><Thunderbird /></Slot><Slot run><Obsidian /></Slot><Slot run><Ai /></Slot>
    <i className="mx-[30px] mt-[18px] h-[118px] w-[2px] shrink-0 bg-[#b7b9b8]" />
    <Slot><DocStack /></Slot><Slot><Trash /></Slot>
  </div>
);

const Tooltip = () => (
  <div className="absolute left-[2720px] top-[1905px] flex h-[53px] w-[167px] items-center justify-center rounded-[10px] bg-[#e8eae9] text-[28px] tracking-[-0.3px] text-[#262626] drop-shadow-[0_0_2px_rgba(0,0,0,0.45)]">
    <T>Obsidian</T>
    <svg viewBox="0 0 34 20" className="absolute left-[67px] top-[52px] h-5 w-[34px]" fill="#e8eae9"><path d="M0 0h34c-4 1-5 2-7 5l-8 13c-1 2-3 2-4 0L7 5C5 2 4 1 0 0z" /></svg>
  </div>
);

const StatusBar = () => (
  <footer className="absolute bottom-0 right-0 flex h-[54px] w-[488px] items-center rounded-tl-[16px] rounded-br-[20px] border-l-2 border-t-2 border-[#e0e0e0] bg-[#f6f6f6] pl-[15px] text-[24px] text-[#5c5c5c]">
    <T className="w-[166px]">0 条反向链接</T>
    <BookOpen className="size-8 shrink-0" strokeWidth={1.75} />
    <T className="ml-[24px] w-[104px]">89 个词</T>
    <T className="tracking-[0.3px]">102 个字符</T>
  </footer>
);

export default function App() {
  return (
    <div className="relative flex h-[2160px] w-[3840px] flex-col overflow-hidden bg-[#020d12] font-['Inter','Noto_Sans_CJK_SC',sans-serif]">
      <MenuBar />
      <main className="mt-px flex h-[2110px] overflow-hidden rounded-[22px] bg-[#f6f6f6]">
        <div className="flex w-[688px] shrink-0 flex-col border-r-2 border-[#e0e0e0]">
          <div className="flex h-20 shrink-0 items-center border-b-2 border-[#e0e0e0] bg-[#fcfcfc] text-[#707070]">
            <i className="ml-[30px] size-6 rounded-full bg-[#fe5f58]" /><i className="ml-4 size-6 rounded-full bg-[#fdbc40]" /><i className="ml-4 size-6 rounded-full bg-[#33c748]" />
            <span className="ml-[42px] flex h-[50px] w-[68px] items-center justify-center rounded-lg bg-[#e9e9e9] text-[#222]"><FolderClosed className="size-9" strokeWidth={1.75} /></span>
            <Search className="ml-[22px] size-9" strokeWidth={1.75} />
            <Bookmark className="ml-[38px] size-9" strokeWidth={1.75} />
            <span className="ml-auto mr-[26px]"><PanelIcon /></span>
          </div>
          <div className="flex grow"><Ribbon /><Explorer /></div>
        </div>
        <Pane /><Pane last />
      </main>
      <StatusBar />
      <Dock />
      <Tooltip />
    </div>
  );
}
